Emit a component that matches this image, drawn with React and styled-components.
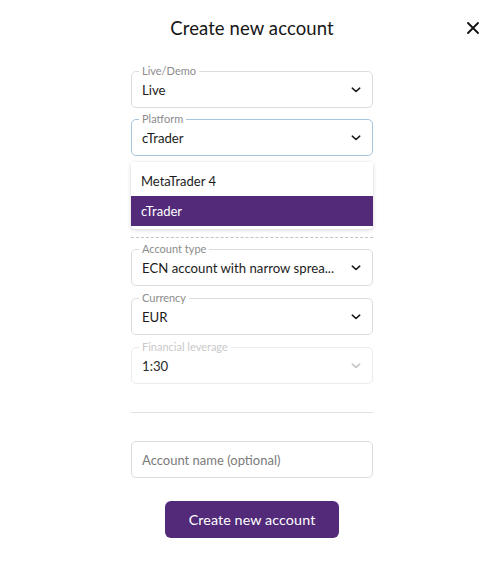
import React, { useState } from "react";
import styled, { createGlobalStyle } from "styled-components";

const Global = createGlobalStyle`
  html, body {
    margin: 0;
    padding: 0;
    background: #ffffff;
  }
  body {
    font-family: "Lato", "Noto Sans", sans-serif;
    color: #1c1c1c;
  }
`;

const Page = styled.div`
  width: 502px;
  height: 567px;
  background: #fff;
  display: flex;
  flex-direction: column;
  align-items: center;
`;

const Header = styled.div`
  width: 100%;
  height: 54px;
  display: grid;
  grid-template-columns: 1fr auto 1fr;
  align-items: center;
  box-sizing: border-box;
  padding-top: 1px;
`;

const Title = styled.h1`
  grid-column: 2;
  margin: 0;
  font-size: 18.5px;
  font-weight: 400;
  letter-spacing: 0.1px;
  color: #161616;
  padding-left: 2px;
`;

const CloseButton = styled.button`
  grid-column: 3;
  justify-self: end;
  margin-right: 20px;
  width: 18px;
  height: 18px;
  padding: 0;
  border: none;
  background: transparent;
  display: flex;
  align-items: center;
  justify-content: center;
  cursor: pointer;
`;

const Form = styled.div`
  width: 242px;
  margin-top: 11px;
  margin-left: 2px;
  display: flex;
  flex-direction: column;
`;

const FieldWrap = styled.div`
  position: relative;
  margin-top: ${(p) => p.$gap ?? 6}px;
  &:first-child {
    margin-top: 0;
  }
`;

const Fieldset = styled.fieldset`
  margin: 0;
  padding: 0 10px 0 10px;
  border: 1px solid ${(p) => (p.$focused ? "#a6c4dc" : p.$disabled ? "#ebebeb" : "#dcdcdc")};
  border-radius: 5px;
  box-sizing: border-box;
  height: 43px;
  display: flex;
  align-items: center;
  justify-content: space-between;
`;

const Legend = styled.legend`
  font-size: 11px;
  line-height: 12px;
  padding: 0 3px;
  margin-left: -3px;
  color: ${(p) => (p.$disabled ? "#c9c9c9" : "#8c8c8c")};
`;

const Value = styled.span`
  font-size: 13.2px;
  line-height: 24px;
  margin-top: -5px;
  padding-right: 12px;
  color: ${(p) => (p.$disabled ? "#2a2a2a" : "#1c1c1c")};
  white-space: nowrap;
  overflow: hidden;
  text-overflow: ellipsis;
`;

const Chevron = styled.svg`
  flex: none;
  margin-top: -5px;
  margin-right: 1px;
`;

const Menu = styled.ul`
  position: absolute;
  left: 0;
  right: 0;
  top: calc(100% + 6px);
  margin: 0;
  padding: 0 0 3px 0;
  list-style: none;
  background: #fff;
  border-radius: 4px;
  box-shadow: 0 1px 4px rgba(0, 0, 0, 0.16), 0 0 1px rgba(0, 0, 0, 0.12);
  z-index: 5;
`;

const MenuItem = styled.li`
  height: ${(p) => (p.$selected ? 30 : 34)}px;
  padding: ${(p) => (p.$selected ? "0 10px" : "3px 10px 0")};
  display: flex;
  align-items: center;
  box-sizing: border-box;
  font-size: 13px;
  color: ${(p) => (p.$selected ? "#fff" : "#1c1c1c")};
  background: ${(p) => (p.$selected ? "#532a79" : "#fff")};
  cursor: pointer;
`;

const HiddenField = styled.div`
  margin-top: 6px;
  height: 76px;
  box-sizing: border-box;
  border-bottom: 1px dashed #c4c4c4;
`;

const Divider = styled.hr`
  margin: 28px 0 0 0;
  border: none;
  border-top: 1px solid #e0e0e0;
  height: 0;
`;

const TextInput = styled.input`
  margin-top: 28px;
  height: 37px;
  box-sizing: border-box;
  border: 1px solid #dcdcdc;
  border-radius: 5px;
  padding: 0 10px;
  font-family: inherit;
  font-size: 13px;
  color: #1c1c1c;
  outline: none;
  &::placeholder {
    color: #7b7b7b;
  }
`;

const SubmitButton = styled.button`
  align-self: center;
  margin-top: 23px;
  width: 174px;
  height: 37px;
  border: none;
  border-radius: 6px;
  background: #532a79;
  color: #fff;
  font-family: inherit;
  font-size: 14.3px;
  letter-spacing: 0.1px;
  cursor: pointer;
`;

function ChevronIcon({ muted }) {
  return (
    <Chevron width="10" height="6" viewBox="0 0 10 6">
      <path
        d="M1.3 1.2 L5 4.5 L8.7 1.2"
        fill="none"
        stroke={muted ? "#c4c4c4" : "#1c1c1c"}
        strokeWidth="1.6"
        strokeLinecap="round"
        strokeLinejoin="round"
      />
    </Chevron>
  );
}

function SelectField({ label, value, focused, disabled, gap, children }) {
  return (
    <FieldWrap $gap={gap}>
      <Fieldset $focused={focused} $disabled={disabled}>
        <Legend $disabled={disabled}>{label}</Legend>
        <Value $disabled={disabled}>{value}</Value>
        <ChevronIcon muted={disabled} />
      </Fieldset>
      {children}
    </FieldWrap>
  );
}

export default function App() {
  const [platform, setPlatform] = useState("cTrader");
  const [name, setName] = useState("");
  const platforms = ["MetaTrader 4", "cTrader"];

  return (
    <Page>
      <Global />
      <Header>
        <Title>Create new account</Title>
        <CloseButton aria-label="Close">
          <svg width="12" height="12" viewBox="0 0 12 12">
            <path
              d="M1 1 L11 11 M11 1 L1 11"
              stroke="#111"
              strokeWidth="1.8"
              strokeLinecap="round"
            />
          </svg>
        </CloseButton>
      </Header>
      <Form>
        <SelectField label="Live/Demo" value="Live" />
        <SelectField label="Platform" value={platform} focused gap={5}>
          <Menu>
            {platforms.map((p) => (
              <MenuItem
                key={p}
                $selected={p === platform}
                onClick={() => setPlatform(p)}
              >
                {p}
              </MenuItem>
            ))}
          </Menu>
        </SelectField>
        <HiddenField />
        <SelectField
          label="Account type"
          value="ECN account with narrow sprea..."
          gap={5}
        />
        <SelectField label="Currency" value="EUR" />
        <SelectField label="Financial leverage" value="1:30" disabled />
        <Divider />
        <TextInput
          placeholder="Account name (optional)"
          value={name}
          onChange={(e) => setName(e.target.value)}
        />
        <SubmitButton>Create new account</SubmitButton>
      </Form>
    </Page>
  );
}
